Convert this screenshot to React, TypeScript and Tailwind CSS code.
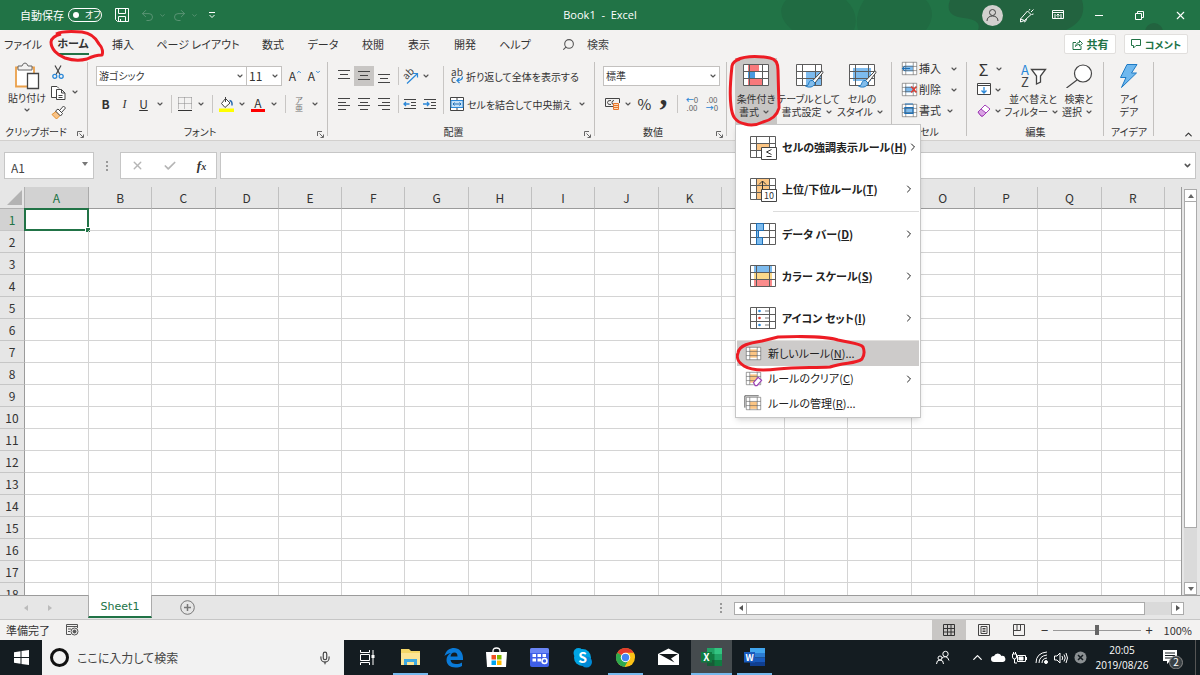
import React from 'react';
import { ChevronDown, ChevronRight, ChevronUp, Search, Undo2, Redo2, X, Check, Mic } from 'lucide-react';

const COLUMNS = 'ABCDEFGHIJKLMNOPQR'.split('');
const ROWS = Array.from({ length: 18 }, (_, i) => i + 1);

const TABS = [
  { label: 'ファイル', width: 'w-[46px]' },
  { label: 'ホーム', width: 'w-[54px]' },
  { label: '挿入', width: 'w-[46px]' },
  { label: 'ページ レイアウト', width: 'w-[104px]' },
  { label: '数式', width: 'w-[46px]' },
  { label: 'データ', width: 'w-[54px]' },
  { label: '校閲', width: 'w-[46px]' },
  { label: '表示', width: 'w-[46px]' },
  { label: '開発', width: 'w-[46px]' },
  { label: 'ヘルプ', width: 'w-[54px]' },
];

interface GridIconProps {
  width?: number;
  height?: number;
  fills?: { x: number; y: number; w: number; h: number; color: string }[];
  children?: React.ReactNode;
}

// 26x22 table glyph shared by the ribbon and the menu
const GridIcon: React.FC<GridIconProps> = ({ width = 26, height = 22, fills = [], children }) => (
  <svg width={width} height={height} viewBox="0 0 26 22" preserveAspectRatio="none" className="shrink-0 overflow-visible" fill="none">
    <rect x="0.5" y="0.5" width="25" height="21" fill="#fff" />
    {fills.map((f, i) => (
      <rect key={i} x={f.x} y={f.y} width={f.w} height={f.h} fill={f.color} />
    ))}
    <path d="M.5.5h25v21H.5zM.5 7.5h25M.5 14.5h25M6.5.5v21M19.5.5v21" stroke="#5c5c5c" strokeWidth="1" />
    {children}
  </svg>
);

const Chev = () => (
  <span className="flex w-3.5 shrink-0 items-center justify-center">
    <ChevronDown size={8} strokeWidth={3.5} color="#555" />
  </span>
);

const Sep = () => <span className="mx-1 h-[18px] w-px shrink-0 bg-[#c8c6c4]" />;

const Lines = ({ d }: { d: string }) => (
  <svg width="14" height="14" viewBox="0 0 14 14" fill="none" stroke="#444">
    <path d={d} />
  </svg>
);

const Brush = () => (
  <g>
    <path d="M25.5 7.5c1-.8 2 .2 1.3 1.3L19 19l-2.5-2.2z" fill="#fff" stroke="#444" />
    <path d="M16.5 16.5c-3-.5-3.500 2-4 3.500-.5 1.500-2 2-3 2 3 2 8.500 1.500 9.500-3z" fill="#83bdeb" stroke="#1e7ac4" />
  </g>
);

interface GroupProps {
  label: string;
  width: string;
  launcher?: boolean;
  children: React.ReactNode;
}

const Group: React.FC<GroupProps> = ({ label, width, launcher, children }) => (
  <section className={`relative flex shrink-0 flex-col pt-1 ${width}`}>
    <div className="flex h-16 items-start">{children}</div>
    <div className={`flex h-4 items-center justify-center text-[10px] leading-4 ${launcher ? 'pr-4' : ''}`}>
      {label}
      {launcher && (
        <button aria-label={`${label}の設定`} className="absolute right-1 bottom-0.5">
          <svg width="7" height="7" viewBox="0 0 7 7" fill="none" stroke="#666">
            <path d="M.5 5V.5H5M2.500 2.500l3.500 3.500M6.500 3.500v3h-3" />
          </svg>
        </button>
      )}
    </div>
    <span className="absolute right-0 top-1 bottom-1 w-px bg-[#c3c1bf]" />
  </section>
);

interface DropDownProps {
  label: string;
  value: string;
  width: string;
  textSize: string;
}

const DropDown: React.FC<DropDownProps> = ({ label, value, width, textSize }) => (
  <div className={`relative h-5 ${width}`}>
    <select aria-label={label} className={`block h-5 w-full appearance-none border border-[#c3c1bf] bg-white px-0.5 leading-4 ${textSize}`}>
      <option>{value}</option>
    </select>
    <span className="pointer-events-none absolute inset-y-0 right-0 flex"><Chev /></span>
  </div>
);

const RedMark = ({ d, width, height, className }: { d: string; width: number; height: number; className: string }) => (
  <svg
    width={width}
    height={height}
    viewBox={`0 0 ${width} ${height}`}
    fill="none"
    stroke="#ed1c24"
    strokeWidth="3"
    strokeLinejoin="round"
    className={`pointer-events-none absolute z-40 ${className}`}
  >
    <path d={d} />
  </svg>
);

const TitleBar = () => (
  <header className="relative flex h-[30px] shrink-0 items-center overflow-hidden bg-[#217346] text-white">
    <svg className="absolute right-0 top-0" width="420" height="30" viewBox="0 0 420 30">
      <path d="M6 0h60q14 14 8 30H12Q-6 14 6 0zM84 0h62q12 14 0 30H78q-4-14 6-30z" fill="#206b42" />
      <path d="M170 0h132q6 20-16 30H198q4-10-14-12-20-2-14-18z" fill="#22633f" />
      <circle cx="374" cy="32" r="9" fill="#22633f" />
    </svg>
    <span className="ml-5 text-[11px]">自動保存</span>
    <button className="ml-1 flex h-[14px] w-[34px] items-center rounded-full border border-white px-1 text-[9px] whitespace-nowrap">
      <span className="mr-1.5 h-1.5 w-1.5 shrink-0 rounded-full bg-white" />
      オフ
    </button>
    <button aria-label="保存" className="ml-3">
      <svg width="16" height="16" viewBox="0 0 16 16" fill="none" stroke="#fff">
        <path d="M1.500 1.500h13v13h-11l-2-2zM4.500 1.500v5h7v-5M4.500 14.500v-5h7v5M6.500 14v-2" />
      </svg>
    </button>
    <button aria-label="元に戻す" className="ml-2.5 flex items-center gap-1 text-[#5d9576]">
      <Undo2 size={15} strokeWidth={1.5} />
      <ChevronDown size={7} strokeWidth={3} />
    </button>
    <button aria-label="やり直し" className="ml-1.5 flex items-center gap-1 text-[#5d9576]">
      <Redo2 size={15} strokeWidth={1.5} />
      <ChevronDown size={7} strokeWidth={3} />
    </button>
    <button aria-label="クイック アクセス ツール バー" className="ml-2.5">
      <svg width="8" height="8" viewBox="0 0 8 8" fill="none" stroke="#fff">
        <path d="M1 1.500h6M1.500 4l2.500 2.500L6.500 4" />
      </svg>
    </button>
    <h1 className="absolute left-1/2 -translate-x-1/2 font-['Open_Sans',sans-serif] text-[11px] whitespace-pre">
      Book1  -  Excel
    </h1>
    <div className="relative ml-auto flex items-center">
      <button aria-label="アカウント" className="flex w-11 justify-center">
        <svg width="21" height="21" viewBox="0 0 21 21" fill="none" stroke="#444">
          <circle cx="10.500" cy="10.500" r="10.500" fill="#d2d0ce" stroke="none" />
          <circle cx="10.500" cy="7.500" r="3" />
          <path d="M5 16c0-3 2-5 5.500-5s5.500 2 5.500 5" />
        </svg>
      </button>
      <button aria-label="近日公開" className="flex w-6 justify-center">
        <svg width="15" height="15" viewBox="0 0 15 15" fill="none" stroke="#fff">
          <path d="M8.500 3 12 6.500 5.500 12.500l-4 1.500v-3zM1.500 11l4 1.500M5 14q2 0 2.500-3M10 2.500l1-1.500M12 4l2.500-2.500M12.500 6.500l2-.5" />
        </svg>
      </button>
      <button aria-label="リボンの表示オプション" className="flex w-10 justify-center">
        <svg width="12" height="10" viewBox="0 0 12 10" fill="none" stroke="#fff">
          <path d="M.5.5h11v8H.5zM.5 2.500h11M6 7.500v-3M4.500 5.500 6 4l1.500 1.500M3 4v4M9 4v4" />
        </svg>
      </button>
      <button aria-label="最小化" className="flex w-[41px] justify-center">
        <span className="h-px w-2 bg-white" />
      </button>
      <button aria-label="元に戻す (縮小)" className="flex w-[41px] justify-center">
        <svg width="9" height="9" viewBox="0 0 9 9" fill="none" stroke="#fff">
          <path d="M.5 2.500h6v6h-6zM2.500 2.500v-2h6v6h-2" />
        </svg>
      </button>
      <button aria-label="閉じる" className="flex w-10 justify-center">
        <X size={13} strokeWidth={2} />
      </button>
    </div>
  </header>
);

const TabBar = () => (
  <nav className="flex h-7 shrink-0 items-center text-[11px]">
    {TABS.map((tab) => (
      <div key={tab.label} className={`relative flex shrink-0 justify-center ${tab.width}`}>
        {tab.label === 'ホーム' ? (
          <>
            <button className="border-b-2 border-[#217346] font-bold leading-5">{tab.label}</button>
            <RedMark
              width={60}
              height={36}
              className="left-0 -top-1"
              d="M10 5C16 2 26 2 36 3c8 1 14 6 17 12 4 4 4 9 3 11-5 0-9 1-15 4-8 2-16 1-22-1C11 26 5 20 5 13c0-4 3-6 10-8"
            />
          </>
        ) : (
          <button className="whitespace-nowrap">{tab.label}</button>
        )}
      </div>
    ))}
    <label className="ml-5 flex items-center gap-3 text-[11px]">
      <Search size={13} strokeWidth={2} color="#555" className="-scale-x-100" />
      <input type="text" placeholder="検索" className="w-24 bg-transparent outline-none placeholder:text-[#444]" />
    </label>
    <div className="ml-auto mr-3 flex gap-2 font-bold text-[#217346]">
      <button className="flex h-5 w-[52px] items-center justify-center gap-1 rounded-xs border border-[#e1dfdd] bg-white">
        <svg width="11" height="11" viewBox="0 0 11 11" fill="none" stroke="#217346">
          <path d="M4 3.500H1v7h8V7M3.500 7.500C4 4.500 5.500 3.500 7.500 3.500V1.500L10.500 4.500l-3 2.500V5.500C5.500 5.500 4.500 6 3.500 7.500z" />
        </svg>
        共有
      </button>
      <button className="flex h-5 w-16 items-center justify-center gap-1 rounded-xs border border-[#e1dfdd] bg-white text-[10px]">
        <svg width="10" height="10" viewBox="0 0 10 10" fill="none" stroke="#217346">
          <path d="M.5.5h9v6H5L2.500 9V6.500h-2z" />
        </svg>
        コメント
      </button>
    </div>
  </nav>
);

const ClipboardGroup = () => (
  <Group label="クリップボード" width="w-[88px]" launcher>
    <button className="ml-1.5 flex w-[42px] flex-col items-center text-[10px] leading-4">
      <svg width="26" height="28" viewBox="0 0 26 28" fill="none">
        <path d="M2 5.500h18v19H2z" fill="#fff" stroke="#eba04a" strokeWidth="1.800" />
        <path d="M4 8V4h4q1-3 3-3t3 3h4v4z" fill="#f3f2f1" stroke="#666" />
        <path d="M13.500 11.500h11v15h-11z" fill="#fff" stroke="#444" strokeWidth="1.300" />
      </svg>
      貼り付け
      <Chev />
    </button>
    <div className="flex flex-col">
      <button aria-label="切り取り" className="flex h-5 w-5 items-center justify-center">
        <svg width="12" height="14" viewBox="0 0 12 14" fill="none">
          <path d="M3 .5 8 9.500M9 .5 4 9.500" stroke="#444" strokeWidth="1.200" />
          <circle cx="2.800" cy="11.300" r="2" stroke="#2b88d8" strokeWidth="1.300" />
          <circle cx="9.200" cy="11.300" r="2" stroke="#2b88d8" strokeWidth="1.300" />
        </svg>
      </button>
      <button aria-label="コピー" className="flex h-5 items-center">
        <span className="flex w-5 justify-center">
          <svg width="15" height="15" viewBox="0 0 15 15" fill="#fff" stroke="#444">
            <path d="M5 12.500H.5v-11H6l2 2" />
            <path d="M5.500 4.500h5l3.500 3.500v6.500H5.500zM10.500 4.500V8H14M7.500 10.500h4M7.500 12.500h4" />
          </svg>
        </span>
        <Chev />
      </button>
      <button aria-label="書式のコピー" className="flex h-5 w-5 items-center justify-center">
        <svg width="15" height="15" viewBox="0 0 15 15" fill="none">
          <path d="M5 6.500 9 10.500 5.500 14 1 9.500z" fill="#f8c489" stroke="#e8912d" />
          <path d="M4.500 6 7 4l4.500 4.500L9.500 11zM8.500 5.500l4-4.500L14.500 3l-4 4.500" fill="#fff" stroke="#444" />
        </svg>
      </button>
    </div>
  </Group>
);

const FontGroup = () => (
  <Group label="フォント" width="w-[240px]" launcher>
    <div className="ml-2 mt-1 flex flex-col gap-2">
      <div className="flex h-5 items-center">
        <DropDown label="フォント名" value="游ゴシック" width="w-[151px]" textSize="text-[10px]" />
        <DropDown label="フォント サイズ" value="11" width="w-9 -ml-px" textSize="text-[12px]" />
        <button className="ml-1 flex w-[19px] justify-center text-[12px]">A<ChevronUp size={6} strokeWidth={4} color="#2b88d8" className="mt-0.5" /></button>
        <button className="flex w-[19px] justify-center text-[12px]">A<ChevronDown size={6} strokeWidth={4} color="#2b88d8" className="mt-0.5" /></button>
      </div>
      <div className="flex h-5 items-center text-[12px]">
        <button className="w-[19px] font-bold">B</button>
        <button className="w-[19px] font-['Liberation_Serif',serif] italic">I</button>
        <button className="w-[19px] underline">U</button>
        <Chev />
        <Sep />
        <button aria-label="罫線" className="flex w-[18px] justify-center">
          <svg width="14" height="14" viewBox="0 0 14 14" fill="none" stroke="#888">
            <path d="M.5.5h13M.5 6.500h13M.5.5v12M6.500.5v12M13.500.5v12" strokeDasharray="1 1" />
            <path d="M0 13.500h14" stroke="#333" />
          </svg>
        </button>
        <Chev />
        <Sep />
        <button aria-label="塗りつぶしの色" className="flex w-[18px] justify-center">
          <svg width="15" height="15" viewBox="0 0 15 15" fill="none">
            <path d="M6.500 1.500 11 6 6 10.500 2.500 6.500zM6.500 5V0" fill="#fff" stroke="#444" />
            <path d="M10.500 3.500q3 .5 2.500 5" stroke="#2b6cb0" strokeWidth="1.500" />
            <path d="M0 11.500h15V15H0z" fill="#ff0" />
          </svg>
        </button>
        <Chev />
        <button aria-label="フォントの色" className="flex w-[18px] flex-col items-center leading-3">
          A<span className="h-[3px] w-3.5 bg-[#f00]" />
        </button>
        <Chev />
        <Sep />
        <button aria-label="ふりがな" className="flex w-[18px] flex-col items-center text-[8px] leading-[8px] text-[#777]">
          <span>ア</span><span>亜</span>
        </button>
        <Chev />
      </div>
    </div>
  </Group>
);

const AlignGroup = () => (
  <Group label="配置" width="w-[267px]" launcher>
    <div className="ml-1.5 mt-1 flex flex-col gap-2">
      <div className="flex h-5 items-center">
        <button aria-label="上揃え" className="flex w-5 justify-center"><Lines d="M1 1.500h12M3 5.500h8M1 9.500h12" /></button>
        <button aria-label="上下中央揃え" className="flex h-5 w-5 items-center justify-center bg-[#c8c6c4]"><Lines d="M1 2.500h12M3 6.500h8M1 10.500h12" /></button>
        <button aria-label="下揃え" className="flex w-5 justify-center"><Lines d="M1 5.500h12M3 9.500h8M1 13.500h12" /></button>
        <Sep />
        <button aria-label="方向" className="flex items-center">
          <svg width="16" height="16" viewBox="0 0 16 16" fill="none">
            <text x="1" y="10" fontSize="10" fill="#444" transform="rotate(-45 5 8)">ab</text>
            <path d="M4 15.500 14 6M10 5.500h4.500v4" stroke="#2b88d8" strokeWidth="1.200" />
          </svg>
          <Chev />
        </button>
      </div>
      <div className="flex h-5 items-center">
        <button aria-label="左揃え" className="flex w-5 justify-center"><Lines d="M1 1.500h12M1 5.500h8M1 8.500h12M1 12.500h8" /></button>
        <button aria-label="中央揃え" className="flex w-5 justify-center"><Lines d="M1 1.500h12M3 5.500h8M1 8.500h12M3 12.500h8" /></button>
        <button aria-label="右揃え" className="flex w-5 justify-center"><Lines d="M1 1.500h12M5 5.500h8M1 8.500h12M5 12.500h8" /></button>
        <Sep />
        <button aria-label="インデントを減らす" className="flex w-5">
          <svg width="14" height="13" viewBox="0 0 14 13" fill="none" stroke="#444">
            <path d="M1 1.500h12M8 4.500h5M8 7.500h5M1 10.500h12" /><path d="M1 6h5.500M3 4 1 6l2 2" stroke="#2b88d8" strokeWidth="1.300" />
          </svg>
        </button>
        <button aria-label="インデントを増やす" className="flex w-5">
          <svg width="14" height="13" viewBox="0 0 14 13" fill="none" stroke="#444">
            <path d="M1 1.500h12M8 4.500h5M8 7.500h5M1 10.500h12" /><path d="M0 6h6M4 4l2 2-2 2" stroke="#2b88d8" strokeWidth="1.300" />
          </svg>
        </button>
      </div>
    </div>
    <div className="mt-1 flex flex-col gap-2 border-l border-[#c8c6c4] pl-1.5 text-[10px]">
      <button className="flex h-5 items-center gap-0.5 whitespace-nowrap">
        <svg width="14" height="16" viewBox="0 0 14 16" fill="none">
          <text x="1" y="8" fontSize="10" fill="#444">ab</text>
          <text x="1" y="15" fontSize="10" fill="#444">c</text>
          <path d="M12.500 8.500q0 4-5 4M9.500 10 7 12.500 9.500 15" stroke="#2b88d8" strokeWidth="1.300" />
        </svg>
        折り返して全体を表示する
      </button>
      <button className="flex h-5 items-center gap-[3px] whitespace-nowrap">
        <svg width="14" height="14" viewBox="0 0 14 14" fill="none">
          <path d="M.5.5h13v13H.5zM.5 3.500h13M.5 10.500h13M7 .5v3M7 10.500v3" stroke="#444" fill="#fff" />
          <path d="M1 3.500h12v7H1z" fill="#c3e0f7" stroke="#2b88d8" /><path d="M3 7h8M4.500 5.500 3 7l1.500 1.500M9.500 5.500 11 7 9.500 8.500" stroke="#1e6fb5" />
        </svg>
        セルを結合して中央揃え
        <Chev />
      </button>
    </div>
  </Group>
);

const NumberGroup = () => (
  <Group label="数値" width="w-[132px]" launcher>
    <div className="ml-2 mt-1 flex flex-col gap-2">
      <DropDown label="表示形式" value="標準" width="w-[117px]" textSize="text-[10px]" />
      <div className="flex h-5 items-center">
        <button aria-label="通貨表示形式" className="ml-0.5 flex items-center">
          <svg width="16" height="14" viewBox="0 0 16 14" fill="none" stroke="#444">
            <path d="M14.500 6V1.500H.5v8H8M6 3.500Q2.500 3 2.500 5.500T6 7.500M9 3.500q-2 0-2 2t1.500 2" />
            <path d="M8.500 6.500h5v6h-5zM8.500 8.500h5M8.500 10.500h5" fill="#fbd9b4" stroke="#e8762d" />
          </svg>
          <Chev />
        </button>
        <button className="w-[19px] text-[15px]">%</button>
        <button className="w-[19px] pb-5 font-['Liberation_Serif',serif] text-[32px] font-bold leading-[10px]">,</button>
        <Sep />
        <button aria-label="小数点以下の表示桁数を増やす" className="flex w-5 flex-col items-center text-[8px] leading-[8px] text-[#666]">
          <span><b className="text-[#2b88d8]">←</b>0</span><span>.00</span>
        </button>
        <button aria-label="小数点以下の表示桁数を減らす" className="flex w-5 flex-col items-center text-[8px] leading-[8px] text-[#666]">
          <span>.00</span><span><b className="text-[#2b88d8]">→</b>0</span>
        </button>
      </div>
    </div>
  </Group>
);

const ORANGE = '#fcc583';
const BLUE = '#7dbbee';
const RED = '#f8797b';

const BIG_ITEMS = [
  {
    label: 'セルの強調表示ルール', key: 'H',
    icon: (
      <GridIcon fills={[{ x: 7, y: 8, w: 12, h: 6, color: ORANGE }]}>
        <path d="M11.500 11.500h15v12h-15z" fill="#fff" stroke="#444" />
        <path d="m21.500 13.500-5 2.500 5 2.500M16.500 20.500h5" stroke="#333" />
      </GridIcon>
    ),
  },
  {
    label: '上位/下位ルール', key: 'T',
    icon: (
      <GridIcon fills={[{ x: 7, y: 1, w: 12, h: 20, color: ORANGE }]}>
        <path d="M12.500 12V3M9 6.500 12.500 3 16 6.500" stroke="#333" />
        <path d="M11.500 11.500h15v12h-15z" fill="#fff" stroke="#444" />
        <text x="14" y="21" fontSize="9" fontWeight="normal" fill="#333">10</text>
      </GridIcon>
    ),
  },
  {
    label: 'データ バー', key: 'D',
    icon: (
      <GridIcon fills={[{ x: 7, y: 1, w: 6, h: 6, color: BLUE }, { x: 7, y: 8, w: 2, h: 6, color: BLUE }, { x: 7, y: 15, w: 5, h: 6, color: BLUE }]}>
        <path d="M6.500.5h7v7h-5v7h4v7h-6z" stroke="#1e6fb5" />
      </GridIcon>
    ),
  },
  {
    label: 'カラー スケール', key: 'S',
    icon: <GridIcon fills={[{ x: 4, y: 1, w: 18, h: 6, color: BLUE }, { x: 4, y: 8, w: 18, h: 6, color: '#fbd98a' }, { x: 4, y: 15, w: 18, h: 6, color: '#fa8c8c' }]} />,
  },
  {
    label: 'アイコン セット', key: 'I',
    icon: (
      <GridIcon>
        <path d="M15 4h4M15 11h4M15 18h4" stroke="#777" />
        <circle cx="9.500" cy="4" r="1.300" fill="#2b88d8" /><circle cx="9.500" cy="11" r="1.300" fill="#e03c31" /><circle cx="9.500" cy="18" r="1.300" fill="#2b88d8" />
      </GridIcon>
    ),
  },
];

const SMALL_ITEMS = [
  { label: '新しいルール', key: 'N', more: '...', icon: <GridIcon width={15} height={13} fills={[{ x: 7, y: 4, w: 12, h: 14, color: ORANGE }]} /> },
  {
    label: 'ルールのクリア', key: 'C', more: '',
    icon: (
      <GridIcon width={15} height={13} fills={[{ x: 7, y: 4, w: 12, h: 14, color: ORANGE }]}>
        <path d="m13 18 8-9 6 5-8 9h-3z" fill="#fff" stroke="#9b3fb5" strokeWidth="2" />
      </GridIcon>
    ),
  },
  {
    label: 'ルールの管理', key: 'R', more: '...',
    icon: (
      <GridIcon width={15} height={13} fills={[{ x: 7, y: 8, w: 12, h: 12, color: ORANGE }]}>
        <path d="M-2 18V-2h24" stroke="#444" strokeWidth="1.500" />
      </GridIcon>
    ),
  },
];

const ConditionalMenu = () => (
  <div role="menu" className="absolute left-0 top-full z-30 w-[186px] border border-[#c6c6c6] bg-white p-px text-left text-[11px] text-[#222] shadow-md">
    {BIG_ITEMS.map((item, i) => (
      <React.Fragment key={item.key}>
        <button role="menuitem" className="flex h-[42px] w-full items-center pl-[13px] pr-1 font-bold">
          {item.icon}
          <span className="ml-1.5 whitespace-nowrap">{item.label}(<u>{item.key}</u>)</span>
          <ChevronRight size={12} strokeWidth={2} className="ml-auto shrink-0" />
        </button>
        {i === 1 && <hr className="my-px ml-9 border-[#dcdcdc]" />}
      </React.Fragment>
    ))}
    <hr className="mt-px border-[#e1dfdd]" />
    {SMALL_ITEMS.map((item) => (
      <button
        key={item.key}
        role="menuitem"
        className={`relative flex h-[25px] w-full items-center pl-[9px] pr-1 ${item.key === 'N' ? 'bg-[#cdcbca]' : ''}`}
      >
        {item.icon}
        <span className="ml-[7px] whitespace-nowrap">{item.label}(<u>{item.key}</u>){item.more}</span>
        {item.key === 'C' && <ChevronRight size={12} strokeWidth={2} className="ml-auto shrink-0" />}
        {item.key === 'N' && (
          <RedMark
            width={132}
            height={38}
            className="-left-px -top-1.5"
            d="M2 18C3 10 14 8 26 6L42 2c26-1 52 0 60 3 12 3 22 3 25 7 2 5 1 9-1 12-6 5-18 3-32 8-16 1-34 0-52 2-18 2-28 1-34-3C3 28 0 23 2 18z"
          />
        )}
      </button>
    ))}
  </div>
);

const StylesGroup = () => (
  <Group label="" width="w-[165px]">
    <div className="relative ml-2 flex text-[10px] leading-[13px]">
      <div className="relative -mt-1 w-[42px] shrink-0">
        <button className="flex h-[66px] w-full flex-col items-center bg-[#c8c6c4] pt-1.5 whitespace-nowrap">
          <GridIcon fills={[{ x: 5, y: 1, w: 11, h: 6, color: RED }, { x: 5, y: 8, w: 7, h: 6, color: '#4a9be0' }, { x: 5, y: 15, w: 14, h: 6, color: RED }]} />
          <span className="mt-1.5">条件付き</span>
          <span className="flex items-center">書式<Chev /></span>
        </button>
        <RedMark
          width={58}
          height={74}
          className="-left-2 -top-1"
          d="M9 6C18 2 32 2 43 4c6 1 8 5 8 12l1 38c-2 8-8 12-16 14-6 3-12 4-18 2C8 68 5 62 4 52 2 38 4 22 5 12q1-5 8-7"
        />
      </div>
      <button className="flex w-[63px] flex-col items-center pt-0.5 whitespace-nowrap">
        <GridIcon fills={[{ x: 10, y: 8, w: 15, h: 13, color: BLUE }]}><Brush /></GridIcon>
        <span className="mt-1.5">テーブルとして</span>
        <span className="flex items-center">書式設定<Chev /></span>
      </button>
      <button className="flex w-11 flex-col items-center pt-0.5 whitespace-nowrap">
        <GridIcon fills={[{ x: 4, y: 4, w: 18, h: 13, color: BLUE }]}><Brush /></GridIcon>
        <span className="mt-1.5">セルの</span>
        <span className="flex items-center">スタイル<Chev /></span>
      </button>
      <ConditionalMenu />
    </div>
  </Group>
);

const CellsGroup = () => (
  <Group label="セル" width="w-[75px]">
    <div className="-mt-1 ml-2.5 flex flex-col text-[11px]">
      {['挿入', '削除', '書式'].map((label) => (
        <button key={label} className="flex h-[21px] items-center gap-0.5">
          <GridIcon width={15} height={13} fills={[{ x: 5, y: 6, w: 14, h: 10, color: BLUE }]}>
            {label === '挿入' && <path d="M14 11H1M5 7l-4 4 4 4" stroke="#1e6fb5" strokeWidth="2" />}
            {label === '削除' && <path d="m16 6 9 10M25 6l-9 10" stroke="#e03c31" strokeWidth="2.500" />}
            {label === '書式' && <path d="M5 6h14v10H5zM5 0h14" stroke="#1e6fb5" strokeWidth="2" />}
          </GridIcon>
          {label}
          <span className={label === '書式' ? '' : 'ml-1'}><Chev /></span>
        </button>
      ))}
    </div>
  </Group>
);

const EditGroup = () => (
  <Group label="編集" width="w-[137px]">
    <div className="-mt-1 ml-2.5 flex w-8 shrink-0 flex-col">
      <button aria-label="オート SUM" className="flex h-[21px] items-center">
        <span className="w-[13px] text-center text-[16px] leading-4">Σ</span>
        <span className="ml-0.5"><Chev /></span>
      </button>
      <button aria-label="フィル" className="flex h-[21px] items-center">
        <svg width="14" height="13" viewBox="0 0 14 13" fill="none" stroke="#444"><path d="M.5.5h13v11H.5zM.5 2.500h13" fill="#fff" /><path d="M7 4v6M4.500 7.500 7 10l2.500-2.500" stroke="#2b88d8" strokeWidth="1.300" /></svg>
        <Chev />
      </button>
      <button aria-label="クリア" className="flex h-[21px] items-center">
        <svg width="14" height="13" viewBox="0 0 14 13" fill="none" stroke="#a23fb8"><path d="m1 8 7-7 5 4-7 7H4z" fill="#fff" /><path d="m1 8 3-3 5 4-3 3H4z" fill="#d9a3e3" /></svg>
        <Chev />
      </button>
    </div>
    <button className="flex w-12 shrink-0 flex-col items-center pt-0.5 text-[10px] leading-[13px] whitespace-nowrap">
      <svg width="26" height="24" viewBox="0 0 26 24" fill="none" strokeWidth="1.300" className="overflow-visible">
        <text x="1" y="11" fontSize="13" fill="#2b88d8">A</text>
        <text x="1" y="23" fontSize="13" fill="#444">Z</text>
        <path d="M11.500 5.500h14l-5 6.500v6l-4 2v-8z" stroke="#444" fill="#fff" />
      </svg>
      <span className="mt-1">並べ替えと</span>
      <span className="flex items-center">フィルター<Chev /></span>
    </button>
    <button className="flex w-11 flex-col items-center pt-0.5 text-[10px] leading-[13px] whitespace-nowrap">
      <svg width="28" height="24" viewBox="0 0 28 24" fill="none" stroke="#444" strokeWidth="1.200">
        <circle cx="18" cy="9.500" r="8.500" fill="#fff" /><path d="M12 16 1.500 24" />
      </svg>
      <span className="mt-1">検索と</span>
      <span className="flex items-center">選択<Chev /></span>
    </button>
  </Group>
);

const Ribbon = () => (
  <div className="relative flex h-[83px] shrink-0 border-b border-[#d2d0ce]">
    <ClipboardGroup />
    <FontGroup />
    <AlignGroup />
    <NumberGroup />
    <StylesGroup />
    <CellsGroup />
    <EditGroup />
    <Group label="アイデア" width="w-[50px]">
      <button className="mx-auto flex flex-col items-center pt-0.5 text-[10px] leading-[13px]">
        <svg width="20" height="24" viewBox="0 0 20 24" fill="#6fb8ee" stroke="#1e7ac4">
          <path d="M8 .5h10L12.500 9h5L2.500 23.500 7 13.500H1.500z" />
        </svg>
        <span className="mt-1">アイ</span>
        <span>デア</span>
      </button>
    </Group>
    <button aria-label="リボンを折りたたむ" className="ml-auto mr-1.5 self-end">
      <ChevronUp size={11} strokeWidth={2.500} />
    </button>
  </div>
);

const FormulaBar = () => (
  <div className="flex shrink-0 items-center px-1 pt-[11px] pb-2">
    <div className="relative h-[27px] w-[90px]">
      <input aria-label="名前ボックス" defaultValue="A1" className="block h-full w-full border border-[#c6c6c6] bg-white pl-1.5 pt-1 text-[12px] text-[#444]" />
      <span className="absolute right-1.5 top-2.5 border-x-[3px] border-t-4 border-x-transparent border-t-[#777]" />
    </div>
    <span className="flex w-[26px] flex-none flex-col items-center gap-0.5">
      <i className="h-0.5 w-0.5 bg-[#999]" /><i className="h-0.5 w-0.5 bg-[#999]" /><i className="h-0.5 w-0.5 bg-[#999]" />
    </span>
    <div className="flex h-[27px] w-[97px] items-center justify-around border border-[#c6c6c6] bg-white">
      <button aria-label="キャンセル"><X size={13} color="#b5b5b5" strokeWidth={2.500} /></button>
      <button aria-label="入力"><Check size={14} color="#b5b5b5" strokeWidth={3} /></button>
      <button className="font-['Liberation_Serif',serif] text-[13px] font-bold italic">f<span className="text-[10px]">x</span></button>
    </div>
    <div className="relative ml-[3px] h-[27px] flex-1">
      <input aria-label="数式バー" className="block h-full w-full border border-[#c6c6c6] bg-white px-2 text-[12px]" />
      <span className="absolute inset-y-0 right-1 flex items-center"><ChevronDown size={9} strokeWidth={4} color="#555" /></span>
    </div>
  </div>
);

const Sheet = () => (
  <main className="flex min-h-0 flex-1 border-b border-[#9b9b9b]">
    <div className="min-w-0 flex-1 overflow-hidden border-r border-[#9b9b9b] bg-white">
      <table className="w-full table-fixed border-separate border-spacing-0 text-[12px] text-[#333]">
        <colgroup>
          <col className="w-[25px]" />
          <col className="w-16" />
          {COLUMNS.slice(1).map((c) => <col key={c} />)}
          <col className="w-4" />
        </colgroup>
        <thead>
          <tr className="h-[22px] bg-[#e6e6e6]">
            <th aria-label="すべて選択" className="border-b border-r border-[#b1b1b1] p-0">
              <svg width="15" height="15" viewBox="0 0 15 15" className="ml-auto mr-0.5"><path d="M15 0v15H0z" fill="#b3b3b3" /></svg>
            </th>
            {COLUMNS.map((c) => (
              <th key={c} className={`border-b border-r p-0 font-normal ${c === 'A' ? 'border-b-[#217346] border-r-[#aaa] bg-[#d2d2d2] text-[#217346]' : 'border-b-[#9b9b9b] border-r-[#c0c0c0]'}`}>
                {c}
              </th>
            ))}
            <th className="border-b border-[#9b9b9b]" />
          </tr>
        </thead>
        <tbody>
          {ROWS.map((r) => (
            <tr key={r} className="h-[22px]">
              <th className={`border-b border-r border-b-[#c6c6c6] border-r-[#9b9b9b] p-0 font-normal leading-5 ${r === 1 ? 'bg-[#d2d2d2] text-[#217346]' : 'bg-[#e6e6e6]'}`}>
                {r}
              </th>
              {COLUMNS.map((c) => (
                <td key={c} className="relative border-b border-r border-[#d4d4d4] p-0">
                  {r === 1 && c === 'A' && (
                    <span className="absolute -inset-px border-2 border-[#217346]">
                      <i className="absolute -right-[3px] -bottom-[3px] h-[5px] w-[5px] border-l border-t border-white bg-[#217346]" />
                    </span>
                  )}
                </td>
              ))}
              <td className="border-b border-[#d4d4d4] p-0" />
            </tr>
          ))}
        </tbody>
      </table>
    </div>
    <div className="ml-0.5 mr-[3px] mt-0.5 flex w-[13px] flex-col bg-[#dadada]">
      <button aria-label="上へスクロール" className="flex h-[13px] items-center justify-center border border-[#ababab] bg-white">
        <span className="border-x-[3px] border-b-4 border-x-transparent border-b-[#666]" />
      </button>
      <div className="flex-[6] border border-t-0 border-[#ababab] bg-white" />
      <div className="flex-1" />
      <button aria-label="下へスクロール" className="flex h-[13px] items-center justify-center border border-[#ababab] bg-white">
        <span className="border-x-[3px] border-t-4 border-x-transparent border-t-[#666]" />
      </button>
    </div>
  </main>
);

const SheetTabs = () => (
  <div className="flex h-6 shrink-0 items-start border-b border-[#c6c6c6]">
    <div className="flex h-6 w-[88px] items-center justify-center gap-5 pr-3">
      <span className="border-y-[3px] border-r-4 border-y-transparent border-r-[#bbb]" />
      <span className="border-y-[3px] border-l-4 border-y-transparent border-l-[#bbb]" />
    </div>
    <button className="-mt-px h-[23px] w-16 border-x border-b-2 border-x-[#ababab] border-b-[#217346] bg-white pt-1 font-['DejaVu_Sans',sans-serif] text-[11px] text-[#217346]">
      Sheet1
    </button>
    <button aria-label="新しいシート" className="ml-7 mt-1">
      <svg width="15" height="15" viewBox="0 0 15 15" fill="none" stroke="#777"><circle cx="7.500" cy="7.500" r="6.800" /><path d="M7.500 4v7M4 7.500h7" strokeWidth="1.500" /></svg>
    </button>
    <div className="ml-auto flex h-6 w-[480px] items-center">
      <span className="mr-3 flex flex-col gap-0.5"><i className="h-0.5 w-0.5 bg-[#999]" /><i className="h-0.5 w-0.5 bg-[#999]" /><i className="h-0.5 w-0.5 bg-[#999]" /></span>
      <button aria-label="左へスクロール" className="flex h-[13px] w-[13px] items-center justify-center border border-[#ababab] bg-white">
        <span className="border-y-[3px] border-r-4 border-y-transparent border-r-[#555]" />
      </button>
      <div className="h-[13px] flex-1 border border-l-0 border-[#ababab] bg-white" />
      <div className="h-[13px] w-[26px] bg-[#dadada]" />
      <button aria-label="右へスクロール" className="mr-4 flex h-[13px] w-[13px] items-center justify-center border border-[#ababab] bg-white">
        <span className="border-y-[3px] border-l-4 border-y-transparent border-l-[#555]" />
      </button>
    </div>
  </div>
);

const StatusBar = () => (
  <footer className="flex h-5 shrink-0 items-center bg-[#f3f2f1] pl-1.5 text-[11px]">
    準備完了
    <svg width="13" height="12" viewBox="0 0 13 12" fill="none" stroke="#555" className="ml-4">
      <path d="M5 10.500H.5V.5h11V4M.5 2.500h11M2 5h3M2 7.500h2" /><circle cx="8.500" cy="7.500" r="3.500" /><circle cx="8.500" cy="7.500" r="1.500" fill="#555" />
    </svg>
    <button aria-label="標準" className="ml-auto flex h-5 w-[34px] items-center justify-center bg-[#c8c6c4]">
      <svg width="12" height="12" viewBox="0 0 12 12" fill="none" stroke="#333"><path d="M.5.5h11v11H.5zM.5 4.500h11M.5 8h11M4.500.5v11M8 .5v11" /></svg>
    </button>
    <button aria-label="ページ レイアウト" className="flex w-9 justify-center">
      <svg width="12" height="12" viewBox="0 0 12 12" fill="none" stroke="#444"><path d="M.5.5h11v11H.5zM3 2.500h6v7H3zM4.500 4.500h3M4.500 6h3M4.500 7.500h3" /></svg>
    </button>
    <button aria-label="改ページ プレビュー" className="flex w-[34px] justify-center">
      <svg width="12" height="12" viewBox="0 0 12 12" fill="none" stroke="#444"><path d="M.5.5h11v11H.5zM4 .5v6M7.500.5v6M.5 6.500h7" /></svg>
    </button>
    <button aria-label="縮小" className="flex w-[17px] justify-center text-[13px]">−</button>
    <input
      type="range"
      aria-label="ズーム"
      defaultValue={50}
      className="h-px w-[88px] appearance-none bg-[#999] [&::-webkit-slider-thumb]:h-2.5 [&::-webkit-slider-thumb]:w-1 [&::-webkit-slider-thumb]:appearance-none [&::-webkit-slider-thumb]:bg-[#666]"
    />
    <button aria-label="拡大" className="flex w-4 justify-center text-[13px]">+</button>
    <span className="w-[43px] pr-2 text-right">100%</span>
  </footer>
);

const APPS = [
  {
    name: 'エクスプローラー', open: true,
    icon: <><path d="M1 2h8l2 2h9v14H1z" fill="#f5d667" /><path d="M1 6h19v12H1z" fill="#fde494" /><path d="M4 18v-6h13v6h-3v-3H7v3z" fill="#3fa9e0" /></>,
  },
  {
    name: 'Edge', open: false,
    icon: <path d="M1.500 9C3 3 7 1 11 1c5 0 9 4 9 10v2H7.500c.5 3 3 4 5.500 4 2.500 0 4-.5 6-1.500V19c-2 1-4 1.500-6.500 1.500C7 20.500 3.500 17.500 3.500 13c0-3 1.500-5.500 4.500-7-3 .5-5 1.500-6.500 3zM7.500 9.500h7c0-2.500-1-4-3-4-2.500 0-3.500 1.500-4 4z" fill="#0a7ad8" />,
  },
  {
    name: 'Microsoft Store', open: false,
    icon: <><path d="M7 6V4q0-3 3.500-3T14 4v2" stroke="#fff" fill="none" strokeWidth="1.300" /><path d="M0 5h21l-1 15H1z" fill="#fff" /><path d="M5.500 8h4.500v4.500H5.500z" fill="#f25022" /><path d="M11 8h4.500v4.500H11z" fill="#7fba00" /><path d="M5.500 13.500h4.500V18H5.500z" fill="#00a4ef" /><path d="M11 13.500h4.500V18H11z" fill="#ffb900" /></>,
  },
  {
    name: 'カレンダー', open: false,
    icon: <><rect x="1" y="1" width="19" height="19" rx="2" fill="#3f5fe8" /><path d="M1 3q0-2 2-2h15q2 0 2 2v3H1z" fill="#6b86f5" /><path d="M3.500 7h3.500v3H3.500zM8.500 7H12v3H8.500zM13.500 7H17v3h-3.500zM3.500 11.500h3.500v3H3.500zM8.500 11.500H12v3H8.500z" fill="#fff" /><circle cx="15.500" cy="14" r="2.500" fill="none" stroke="#fff" strokeWidth="1.500" /></>,
  },
  {
    name: 'Skype', open: false,
    icon: <><circle cx="10.500" cy="10.500" r="8.500" fill="#00a4e4" /><circle cx="6.500" cy="6" r="5" fill="#00a4e4" /><circle cx="14.500" cy="15" r="5.500" fill="#0089d6" /><text x="10.500" y="15.500" textAnchor="middle" fontSize="14" fontWeight="bold" fill="#fff">S</text></>,
  },
  {
    name: 'Chrome', open: true,
    icon: <><circle cx="10.500" cy="10.500" r="9.500" fill="#fbc116" /><path d="M10.500 10.500 2.300 5.700A9.500 9.500 0 0 1 18.700 5.700z" fill="#e33b2e" /><path d="M10.500 10.500H20A9.500 9.500 0 0 0 18.700 5.700H10.500z" fill="#fbc116" /><path d="M2.300 5.700A9.500 9.500 0 0 0 9.500 20l4-7-3-2.500z" fill="#2da94f" /><circle cx="10.500" cy="10.500" r="4.700" fill="#fff" /><circle cx="10.500" cy="10.500" r="3.700" fill="#4285f4" /></>,
  },
  {
    name: 'メール', open: false,
    icon: <><path d="M0 7 10.500 1.500 21 7v11H0z" fill="#fff" /><path d="M1 7h19l-7 4.500 3.500 4L10 12z" fill="#14181b" /></>,
  },
  {
    name: 'Excel', open: true,
    icon: <><path d="M6 1h15v18H6z" fill="#21a366" /><path d="M13.500 1H21v6h-7.500z" fill="#33c481" /><path d="M6 7h7.500v6H6z" fill="#107c41" /><path d="M6 13h15v6H6z" fill="#185c37" /><path d="M13.500 13H21v6h-7.500z" fill="#107c41" /><path d="M0 5h11v10.500H0z" fill="#107c41" /><text x="5.500" y="14" textAnchor="middle" fontSize="10" fontWeight="bold" fill="#fff">X</text></>,
  },
  {
    name: 'Word', open: true,
    icon: <><path d="M6 1h15v5H6z" fill="#41a5ee" /><path d="M6 6h15v4.500H6z" fill="#2b7cd3" /><path d="M6 10.500h15V15H6z" fill="#185abd" /><path d="M6 15h15v4H6z" fill="#103f91" /><path d="M0 5h11v10.500H0z" fill="#185abd" /><text x="5.500" y="13.500" textAnchor="middle" fontSize="9" fontWeight="bold" fill="#fff">W</text></>,
  },
];

const Taskbar = () => (
  <div className="flex h-[35px] shrink-0 items-stretch bg-[#141c21] text-white">
    <button aria-label="スタート" className="flex w-[42px] items-center justify-center">
      <svg width="15" height="15" viewBox="0 0 15 15" fill="#fff"><path d="M0 2.200 6.500 1.200V7H0zM7.500 1 15 0v7H7.500zM0 8h6.500v5.800L0 12.800zM7.500 8H15v7l-7.500-1z" /></svg>
    </button>
    <label className="flex w-[302px] items-center bg-[#f2f2f2] pl-2 pr-3 text-[#444]">
      <span className="h-[19px] w-[19px] shrink-0 rounded-full border-[3px] border-[#111]" />
      <input type="text" placeholder="ここに入力して検索" className="ml-2 min-w-0 flex-1 bg-transparent text-[12px] outline-none placeholder:text-[#444]" />
      <Mic size={14} strokeWidth={2} />
    </label>
    <button aria-label="タスク ビュー" className="flex w-[45px] items-center justify-center">
      <svg width="16" height="15" viewBox="0 0 16 15" fill="none" stroke="#fff"><path d="M1.500 4.500h9v6h-9zM1.500 0v2.500h9V0M1.500 15v-2.500h9V15M14 0v15" /><path d="M14 5v3" strokeWidth="3" /></svg>
    </button>
    {APPS.map((app) => (
      <button key={app.name} aria-label={app.name} className="relative flex w-[43px] items-center justify-center">
        <span className={`flex h-full w-[41px] items-center justify-center ${app.name === 'Excel' ? 'bg-[#454b4e]' : ''}`}>
          <svg width="21" height="21" viewBox="0 0 21 21">{app.icon}</svg>
        </span>
        {app.open && <span className={`absolute bottom-0 h-0.5 bg-[#76b9ed] ${app.name === 'Excel' ? 'inset-x-px' : 'inset-x-1'}`} />}
      </button>
    ))}
    <div className="ml-auto flex items-center">
      <svg width="14" height="15" viewBox="0 0 14 15" fill="none" stroke="#fff" className="mr-5"><circle cx="9.500" cy="4" r="2.700" /><path d="M5.500 8.500Q7 6.500 9.500 6.700t3.500 3.800" /><circle cx="4" cy="8" r="2" /><path d="M.5 14q0-4 3.500-4t3.500 4" /></svg>
      <ChevronUp size={15} strokeWidth={2} className="mr-1.5" />
      <svg width="15" height="11" viewBox="0 0 15 11" fill="#fff" className="mr-1.5"><path d="M3 10a3 3 0 0 1 0-6 4 4 0 0 1 7.500 0A3 3 0 0 1 12 10z" /></svg>
      <svg width="15" height="12" viewBox="0 0 15 12" fill="none" stroke="#fff" className="mr-2"><path d="M5.500 3.500h8v6h-8zM.5 2v3q0 2 2 2t2-2V2zM2.500 7v4H5M1.500 0v2M3.500 0v2" /><path d="M7 5h4v3H7z" fill="#fff" /><path d="M14.500 5v3" /></svg>
      <svg width="13" height="13" viewBox="0 0 13 13" fill="none" stroke="#fff" className="mr-1.5"><path d="M1 12Q1 2 12 1M4 12q0-7 8-8M7 12q0-4.500 5-5" /><circle cx="11" cy="11" r="1.500" fill="#fff" /></svg>
      <svg width="14" height="12" viewBox="0 0 14 12" fill="none" stroke="#fff" className="mr-1.5"><path d="M.5 4v4H3l3 3V1L3 4zM8 4q1.500 2 0 4M10 2.500q2.500 3.500 0 7M12 1q3 5 0 10" /></svg>
      <svg width="13" height="13" viewBox="0 0 13 13" className="mr-2"><circle cx="6.500" cy="6.500" r="6" fill="#8b9093" /><path d="m4 4 5 5M9 4 4 9" stroke="#141c21" strokeWidth="1.500" /></svg>
      <time className="w-[54px] text-center font-['Open_Sans',sans-serif] text-[10px] leading-[15px]">20:05<br />2019/08/26</time>
      <button aria-label="アクション センター" className="relative ml-3.5 mr-3">
        <svg width="20" height="22" viewBox="0 0 20 22"><path d="M0 3h14v11H7l-3 3v-3H0z" fill="#fff" /><path d="M2 6h10M2 8.500h10M2 11h10" stroke="#141c21" /><circle cx="13" cy="15.500" r="6.500" fill="#3b4246" stroke="#888" /><text x="13" y="19" textAnchor="middle" fontSize="10" fill="#fff">2</text></svg>
      </button>
      <span className="mr-1 h-full w-px bg-[#555]" />
    </div>
  </div>
);

export default function App() {
  return (
    <div
      lang="ja"
      className="flex h-screen flex-col overflow-hidden bg-[#e6e6e6] font-['Noto_Sans_CJK_JP',sans-serif] text-[#333] [font-feature-settings:'palt']"
    >
      <TitleBar />
      <div className="flex shrink-0 flex-col bg-[#f3f2f1]">
        <TabBar />
        <Ribbon />
      </div>
      <FormulaBar />
      <Sheet />
      <SheetTabs />
      <StatusBar />
      <Taskbar />
    </div>
  );
}
